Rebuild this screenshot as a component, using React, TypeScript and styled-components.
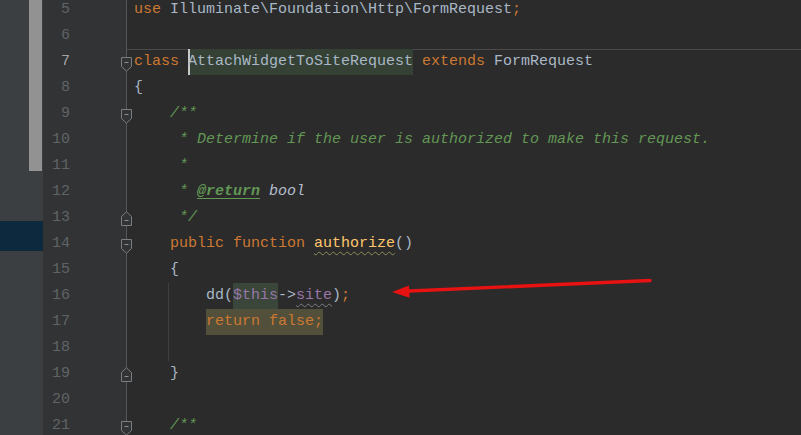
import styled, { createGlobalStyle, css } from 'styled-components';

const GlobalStyle = createGlobalStyle`
  html, body {
    margin: 0;
    padding: 0;
    background: #2b2b2b;
  }
  body {
    overflow: hidden;
  }
`;

const Screen = styled.div`
  position: relative;
  display: flex;
  width: 801px;
  height: 435px;
  overflow: hidden;
  background: #2b2b2b;
  font-family: 'Liberation Mono', 'DejaVu Sans Mono', monospace;
  font-size: 15px;
`;

const ProjectPanel = styled.div`
  position: relative;
  flex: 0 0 43px;
  box-sizing: border-box;
  padding-top: 221px;
  background: #3c3f41;
`;

const TreeRow = styled.div<{ $selected?: boolean }>`
  height: 30px;
  background: ${({ $selected }) => ($selected ? '#0d293e' : 'transparent')};
`;

const ScrollThumb = styled.div`
  position: absolute;
  top: 0;
  left: 29px;
  width: 13px;
  height: 171px;
  background: #929292;
`;

const Editor = styled.div`
  flex: 1;
  overflow: hidden;
`;

const Lines = styled.div`
  margin-top: -3px;
`;

const Line = styled.div`
  display: grid;
  grid-template-columns: 84px 1fr;
  height: 26px;
  line-height: 26px;
`;

const Gutter = styled.div`
  display: flex;
  align-items: center;
  background: #313335;
  border-right: 1px solid #555758;
`;

const LineNo = styled.span<{ $current?: boolean }>`
  width: 27px;
  text-align: right;
  color: ${({ $current }) => ($current ? '#a4a3a3' : '#606366')};
`;

const FoldMark = styled.svg<{ $dir: 'open' | 'close' }>`
  position: relative;
  z-index: 1;
  margin-left: auto;
  margin-right: -6px;
  transform: translateY(${({ $dir }) => ($dir === 'open' ? '2px' : '0')});
`;

const Code = styled.div<{ $separator?: boolean; $guide?: boolean }>`
  padding-left: 7px;
  white-space: pre;
  color: #a9b7c6;
  ${({ $separator }) =>
    $separator &&
    css`
      box-shadow: inset 0 1px 0 #4a4a4a;
    `}
  ${({ $guide }) =>
    $guide &&
    css`
      background: linear-gradient(#3f3f3f, #3f3f3f) no-repeat 41px 0 / 1px 100%;
    `}
`;

type Kind =
  | 'plain'
  | 'kw'
  | 'doc'
  | 'docTag'
  | 'docType'
  | 'fn'
  | 'var'
  | 'field'
  | 'classDecl'
  | 'varHit'
  | 'kwHit';

const kinds: Record<Kind, ReturnType<typeof css>> = {
  plain: css`
    color: #a9b7c6;
  `,
  kw: css`
    color: #cc7832;
  `,
  doc: css`
    color: #629755;
    font-style: italic;
  `,
  docTag: css`
    color: #629755;
    font-style: italic;
    font-weight: bold;
    text-decoration: underline;
    text-underline-offset: 3px;
  `,
  docType: css`
    color: #b4bccb;
    font-style: italic;
  `,
  fn: css`
    color: #ffc66d;
    text-decoration: underline wavy #8e8c5c;
    text-decoration-thickness: 1px;
    text-underline-offset: 4px;
  `,
  var: css`
    color: #9876aa;
  `,
  field: css`
    color: #9876aa;
    text-decoration: underline wavy #7d7d86;
    text-decoration-thickness: 1px;
    text-underline-offset: 4px;
  `,
  classDecl: css`
    display: inline-block;
    color: #a9b7c6;
    background: #344134;
    box-shadow: inset 2px 0 0 #c8c8c8;
    height: 26px;
    vertical-align: top;
  `,
  varHit: css`
    display: inline-block;
    color: #9876aa;
    background: #3a4639;
    height: 26px;
    vertical-align: top;
  `,
  kwHit: css`
    display: inline-block;
    color: #cc7832;
    background: #52503a;
    height: 26px;
    vertical-align: top;
  `,
};

const Token = styled.span<{ $kind: Kind }>`
  ${({ $kind }) => kinds[$kind]}
`;

const Overlay = styled.svg`
  position: absolute;
  inset: 0;
  pointer-events: none;
`;

type Tok = [string, Kind];

type SourceLine = {
  n: number;
  tokens: Tok[];
  fold?: 'open' | 'close';
  separator?: boolean;
  guide?: boolean;
};

const source: SourceLine[] = [
  { n: 5, tokens: [['use ', 'kw'], ['Illuminate\\Foundation\\Http\\FormRequest', 'plain'], [';', 'kw']] },
  { n: 6, tokens: [] },
  {
    n: 7,
    fold: 'open',
    separator: true,
    tokens: [
      ['class ', 'kw'],
      ['AttachWidgetToSiteRequest', 'classDecl'],
      [' extends ', 'kw'],
      ['FormRequest', 'plain'],
    ],
  },
  { n: 8, tokens: [['{', 'plain']] },
  { n: 9, fold: 'open', tokens: [['    /**', 'doc']] },
  { n: 10, tokens: [['     * Determine if the user is authorized to make this request.', 'doc']] },
  { n: 11, tokens: [['     *', 'doc']] },
  { n: 12, tokens: [['     * ', 'doc'], ['@return', 'docTag'], [' ', 'doc'], ['bool', 'docType']] },
  { n: 13, fold: 'close', tokens: [['     */', 'doc']] },
  {
    n: 14,
    fold: 'open',
    tokens: [['    public function ', 'kw'], ['authorize', 'fn'], ['()', 'plain']],
  },
  { n: 15, tokens: [['    {', 'plain']] },
  {
    n: 16,
    guide: true,
    tokens: [
      ['        dd(', 'plain'],
      ['$this', 'varHit'],
      ['->', 'plain'],
      ['site', 'field'],
      [')', 'plain'],
      [';', 'kw'],
    ],
  },
  { n: 17, guide: true, tokens: [['        ', 'plain'], ['return false;', 'kwHit']] },
  { n: 18, guide: true, tokens: [] },
  { n: 19, fold: 'close', tokens: [['    }', 'plain']] },
  { n: 20, tokens: [] },
  { n: 21, fold: 'open', tokens: [['    /**', 'doc']] },
];

const CURRENT_LINE = 7;

function Fold({ dir }: { dir: 'open' | 'close' }) {
  return (
    <FoldMark $dir={dir} width="11" height="15" viewBox="0 0 11 15">
      {dir === 'open' ? (
        <>
          <path d="M0.5 0.5H10.5V9.5L5.5 14.2L0.5 9.5Z" fill="#313335" stroke="#7b7e80" />
          <path d="M3.5 5.5H7.5" stroke="#8b8e90" />
        </>
      ) : (
        <>
          <path d="M0.5 14.5H10.5V5.5L5.5 0.8L0.5 5.5Z" fill="#313335" stroke="#7b7e80" />
          <path d="M3.5 9.5H7.5" stroke="#8b8e90" />
        </>
      )}
    </FoldMark>
  );
}

export default function App() {
  return (
    <>
      <GlobalStyle />
      <Screen>
        <ProjectPanel>
          <TreeRow $selected />
          <ScrollThumb />
        </ProjectPanel>
        <Editor>
          <Lines>
            {source.map((line) => (
              <Line key={line.n}>
                <Gutter>
                  <LineNo $current={line.n === CURRENT_LINE}>{line.n}</LineNo>
                  {line.fold && <Fold dir={line.fold} />}
                </Gutter>
                <Code $separator={line.separator} $guide={line.guide}>
                  {line.tokens.map(([text, kind], i) => (
                    <Token key={i} $kind={kind}>
                      {text}
                    </Token>
                  ))}
                  {line.tokens.length === 0 ? ' ' : null}
                </Code>
              </Line>
            ))}
          </Lines>
        </Editor>
        <Overlay width="801" height="435" viewBox="0 0 801 435">
          <path d="M650 280.5L404 291.2" stroke="#e81212" strokeWidth="3.4" strokeLinecap="round" />
          <path d="M392 292L409 285.6L409.6 297.8Z" fill="#e81212" />
        </Overlay>
      </Screen>
    </>
  );
}
